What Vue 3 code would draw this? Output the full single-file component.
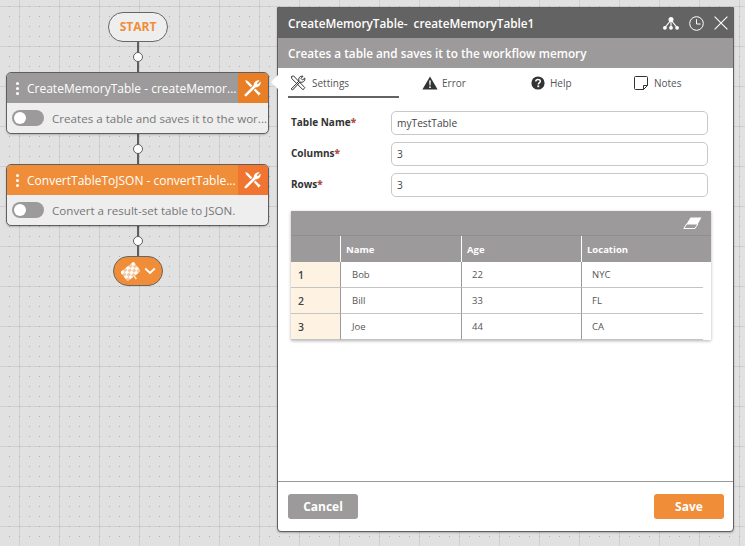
<script setup>
const nodes = [
  { id: 1, title: 'CreateMemoryTable - createMemor...', text: 'Creates a table and saves it to the wor...', top: 72, cls: 'grey' },
  { id: 2, title: 'ConvertTableToJSON - convertTable...', text: 'Convert a result-set table to JSON.', top: 164, cls: 'orange' }
];
const links = [
  { id: 1, top: 41, height: 31, dot: 56 },
  { id: 2, top: 134, height: 30, dot: 148 },
  { id: 3, top: 226, height: 32, dot: 240 }
];
const tabs = [
  { id: 's', label: 'Settings' },
  { id: 'e', label: 'Error' },
  { id: 'h', label: 'Help' },
  { id: 'n', label: 'Notes' }
];
const fields = [
  { label: 'Table Name', value: 'myTestTable' },
  { label: 'Columns', value: '3' },
  { label: 'Rows', value: '3' }
];
const rows = [
  { n: 1, name: 'Bob', age: 22, loc: 'NYC' },
  { n: 2, name: 'Bill', age: 33, loc: 'FL' },
  { n: 3, name: 'Joe', age: 44, loc: 'CA' }
];
// checks of the finish flag
const checks = [];
for (let r = 0; r < 4; r++) {
  for (let c = 0; c < 5; c++) {
    if ((r + c) % 2 === 0) checks.push({ x: 1 + c * 3.2, y: 3.5 + r * 2.8 });
  }
}
</script>

<template>
  <div class="canvas">
    <div v-for="l in links" :key="l.id" class="link" :style="{ top: l.top + 'px', height: l.height + 'px' }"></div>
    <div v-for="l in links" :key="'d' + l.id" class="port" :style="{ top: l.dot - 4 + 'px' }"></div>

    <div class="start">START</div>

    <div v-for="n in nodes" :key="n.id" class="node" :class="n.cls" :style="{ top: n.top + 'px' }">
      <div class="node-head">
        <span class="grip"><i></i><i></i><i></i></span>
        <span class="node-title">{{ n.title }}</span>
        <span class="node-tool">
          <svg width="18" height="18" viewBox="0 0 18 18" fill="none">
            <!-- screwdriver under the wrench, with a gap at the crossing -->
            <path d="M1.2 1 L3.8 2 L15 13.2 L16.8 14.2 L14.4 16.8 L13.4 15 L2.2 3.8 Z" fill="#fff" />
            <path d="M1.8 16.2 L11 7" stroke="currentColor" stroke-width="4.4" />
            <path d="M1.8 16.2 L11 7" stroke="#fff" stroke-width="2.5" stroke-linecap="round" />
            <path d="M10 8 C8.8 4.4 11.8 .6 15.6 1.4 L12.8 4.2 L13.8 5.2 L16.6 2.4 C17.4 6.2 13.6 9.2 10 8 Z" fill="#fff" />
          </svg>
        </span>
      </div>
      <div class="node-body">
        <span class="toggle"><i></i></span>
        <span class="node-text">{{ n.text }}</span>
      </div>
    </div>

    <div class="end">
      <svg width="19" height="19" viewBox="0 0 18 18">
        <g transform="rotate(-38 9 9)">
          <rect x="1" y="3.5" width="16" height="11.2" fill="#f7c79d" />
          <rect v-for="(k, i) in checks" :key="i" :x="k.x" :y="k.y" width="3.2" height="2.8" fill="#fff" />
          <path d="M9 14.5 V18" stroke="#fde9d8" stroke-width="1.4" />
        </g>
      </svg>
      <svg width="12" height="8" viewBox="0 0 12 8" fill="none" stroke="#fff" stroke-width="1.8"><path d="M1.2 1.5 L6 6 L10.8 1.5" /></svg>
    </div>

    <div class="pointer"></div>

    <section class="panel">
      <header class="panel-top">
        <span class="panel-title">CreateMemoryTable-&nbsp; createMemoryTable1</span>
        <span class="panel-icons">
          <svg width="16" height="13" viewBox="0 0 16 13" fill="#fff">
            <circle cx="8" cy="2.6" r="2.5" /><circle cx="1.9" cy="10.8" r="1.9" /><circle cx="8" cy="10.8" r="1.9" /><circle cx="14.1" cy="10.8" r="1.9" />
            <path d="M8 3 L1.9 10.6 M8 3 V10.6 M8 3 L14.1 10.6" stroke="#fff" stroke-width="1.1" />
          </svg>
          <svg width="15" height="15" viewBox="0 0 15 15" fill="none" stroke="#fff" stroke-width="1">
            <circle cx="7.5" cy="7.5" r="6.8" /><path d="M7.5 3.2 V8 H11.6" />
          </svg>
          <svg width="14" height="14" viewBox="0 0 14 14" fill="none" stroke="#fff" stroke-width="1.1">
            <path d="M.6 .6 L13.4 13.4 M13.4 .6 L.6 13.4" />
          </svg>
        </span>
      </header>
      <div class="panel-sub">Creates a table and saves it to the workflow memory</div>

      <nav class="tabs">
        <div v-for="t in tabs" :key="t.id" class="tab" :class="'tab-' + t.id">
          <svg v-if="t.id === 's'" width="16" height="16" viewBox="0 0 16 16" fill="none" stroke="#333" stroke-width="1">
            <path d="M1.2 14 L9 6 C8 3 10 .8 13 1.2 L11 3.4 L12.6 5 L14.8 3 C15.2 6 13 8 10 7 L2.6 15 Z" />
            <path d="M1.5 1.5 L3.5 .9 L14.8 12.6 L13 14.8 L1.8 3.6 Z" />
          </svg>
          <svg v-else-if="t.id === 'e'" width="16" height="14" viewBox="0 0 16 14">
            <path d="M8 .4 L15.6 13.6 H.4 Z" fill="#333" />
            <path d="M7.2 4.6 H8.8 L8.5 9.4 H7.5 Z M7.2 10.4 H8.8 V12 H7.2 Z" fill="#fff" />
          </svg>
          <svg v-else-if="t.id === 'h'" width="14" height="14" viewBox="0 0 14 14">
            <circle cx="7" cy="7" r="6.6" fill="#333" />
            <path d="M4.8 5.4 C4.8 2.8 9.3 2.8 9.3 5.3 C9.3 7 7.3 6.8 7.3 8.4" fill="none" stroke="#fff" stroke-width="1.5" />
            <rect x="6.4" y="9.4" width="1.8" height="1.8" fill="#fff" />
          </svg>
          <svg v-else width="14" height="14" viewBox="0 0 14 14" fill="none" stroke="#333" stroke-width="1">
            <path d="M1.5 .5 H12.5 Q13.5 .5 13.5 1.5 V9.5 L9.5 13.5 H1.5 Q.5 13.5 .5 12.5 V1.5 Q.5 .5 1.5 .5 Z" />
            <path d="M13.5 9.5 H9.5 V13.5" />
          </svg>
          <span>{{ t.label }}</span>
        </div>
      </nav>

      <div class="panel-main">
        <div class="fields">
          <div v-for="f in fields" :key="f.label" class="field">
            <label>{{ f.label }}<b>*</b></label>
            <div class="input">{{ f.value }}</div>
          </div>
        </div>

        <div class="grid-wrap">
          <div class="grid-bar">
            <svg width="19" height="12" viewBox="0 0 19 12">
              <path d="M7.5 .5 H18.5 L14.8 7 H3.6 Z" fill="#fff" />
              <path d="M3.6 7 H14.8 L12 11.5 H.8 Z" fill="none" stroke="#fff" stroke-width="1" />
            </svg>
          </div>
          <div class="grid-row grid-head">
            <div class="c0"></div>
            <div class="c c1">Name</div>
            <div class="c c2">Age</div>
            <div class="c c3">Location</div>
          </div>
          <div v-for="r in rows" :key="r.n" class="grid-row grid-line">
            <div class="c0">{{ r.n }}</div>
            <div class="c c1">{{ r.name }}</div>
            <div class="c c2">{{ r.age }}</div>
            <div class="c c3">{{ r.loc }}</div>
          </div>
        </div>
      </div>

      <footer class="panel-foot">
        <button class="btn cancel">Cancel</button>
        <button class="btn save">Save</button>
      </footer>
    </section>
  </div>
</template>

<style>
html, body { margin: 0; padding: 0; }
</style>

<style scoped>
.canvas {
  position: relative;
  width: 745px;
  height: 546px;
  overflow: hidden;
  font-family: "Open Sans", sans-serif;
  background-color: #e1e1e1;
  background-image:
    linear-gradient(to right, #d0d0d0 1px, transparent 1px),
    linear-gradient(to bottom, #d0d0d0 1px, transparent 1px);
  background-size: 40px 40px, 40px 40px;
  background-position: 19px 0, 0 6px;
}
.canvas::before {
  content: "";
  position: absolute;
  inset: 0;
  background-image: radial-gradient(circle at 0.5px 0.5px, #b0b0b0 0.7px, transparent 0.8px);
  background-size: 10px 10px;
  background-position: 9px 6px;
}
.link {
  position: absolute;
  left: 137px;
  width: 2px;
  background: #5f5f5f;
}
.port {
  position: absolute;
  left: 133px;
  width: 8px;
  height: 8px;
  border: 1px solid #5f5f5f;
  border-radius: 50%;
  background: #fff;
}
.start {
  position: absolute;
  left: 108px;
  top: 12px;
  width: 58px;
  height: 28px;
  border: 1px solid #666;
  border-radius: 15px;
  background: #eeeeee;
  color: #ef8d38;
  font-size: 12px;
  font-weight: 700;
  line-height: 28px;
  text-align: center;
}
.node {
  position: absolute;
  left: 6px;
  width: 261px;
  height: 60px;
  border: 1px solid #5f5f5f;
  border-radius: 5px;
  background: #eeeeee;
  overflow: hidden;
  box-shadow: 0 1px 2px rgba(0, 0, 0, .2);
}
.node-head {
  display: flex;
  align-items: center;
  height: 30px;
  color: #fff;
}
.grey .node-head { background: #9c9a9a; }
.orange .node-head { background: #ef8d38; }
.grip {
  display: flex;
  flex-direction: column;
  gap: 2px;
  margin-left: 9px;
  width: 3px;
}
.grip i {
  width: 3px;
  height: 3px;
  border-radius: 50%;
  background: #fff;
}
.node-title {
  flex: 1;
  min-width: 0;
  margin-left: 8px;
  font-size: 12px;
  white-space: nowrap;
  overflow: hidden;
}
.node-tool {
  display: flex;
  flex: none;
  align-items: center;
  justify-content: center;
  width: 30px;
  height: 30px;
}
.grey .node-tool { background: #e87e25; color: #e87e25; }
.orange .node-tool { background: #f07531; color: #f07531; }
.node-body {
  display: flex;
  align-items: center;
  height: 30px;
  padding-left: 5px;
}
.toggle {
  position: relative;
  width: 32px;
  height: 16px;
  border-radius: 8px;
  background: #9c9a9a;
  flex: none;
}
.toggle i {
  position: absolute;
  left: 2px;
  top: 2px;
  width: 12px;
  height: 12px;
  border-radius: 50%;
  background: #fff;
}
.node-text {
  margin-left: 8px;
  color: #777;
  font-size: 11.6px;
  white-space: nowrap;
}
.end {
  position: absolute;
  left: 113px;
  top: 256px;
  width: 48px;
  height: 28px;
  display: flex;
  align-items: center;
  justify-content: center;
  gap: 4px;
  border: 1px solid #666;
  border-radius: 15px;
  background: #ef8d38;
}
.pointer {
  position: absolute;
  left: 273px;
  top: 77px;
  width: 10px;
  height: 10px;
  background: #fff;
  transform: rotate(45deg);
  z-index: 2;
}
.panel {
  position: absolute;
  left: 277px;
  top: 7px;
  width: 455px;
  height: 523px;
  display: flex;
  flex-direction: column;
  border: 1px solid #5f5f5f;
  border-radius: 0 0 4px 4px;
  background: #fff;
  box-shadow: 0 1px 2px rgba(0, 0, 0, .25);
  z-index: 1;
}
.panel-top {
  display: flex;
  align-items: center;
  justify-content: space-between;
  height: 30px;
  padding: 0 5px 0 10px;
  background: #636363;
  color: #fff;
  font-size: 11.75px;
  font-weight: 600;
}
.panel-icons {
  display: flex;
  align-items: center;
  gap: 10px;
}
.panel-sub {
  height: 30px;
  padding-left: 10px;
  background: #9c9a9a;
  color: #fff;
  font-size: 11.75px;
  font-weight: 600;
  line-height: 30px;
}
.tabs {
  display: grid;
  grid-template-columns: repeat(4, 111px);
  padding-left: 10px;
  height: 30px;
}
.tab {
  box-sizing: border-box;
  display: flex;
  align-items: center;
  gap: 5px;
  height: 30px;
  color: #555;
  font-size: 10px;
}
.tab-s { border-bottom: 2px solid #636363; padding: 2px 0 0 2px; gap: 6px; }
.tab-e { padding-left: 23px; gap: 4px; }
.tab-h { padding-left: 21px; }
.tab-n { padding-left: 13px; gap: 6px; }
.panel-main {
  flex: 1;
  padding: 13px 25px 0 13px;
}
.fields {
  display: flex;
  flex-direction: column;
  gap: 7px;
}
.field {
  display: flex;
  align-items: center;
  height: 24px;
}
.field label {
  width: 100px;
  padding-bottom: 2px;
  color: #333;
  font-size: 10px;
  font-weight: 700;
}
.field label b { color: #b5483f; }
.input {
  flex: 1;
  box-sizing: border-box;
  height: 24px;
  border: 1px solid #c8c8c8;
  border-radius: 5px;
  padding-left: 5px;
  color: #444;
  font-size: 10.2px;
  line-height: 23px;
}
.grid-wrap {
  margin-top: 14px;
  margin-right: -3px;
  background: #fff;
  box-shadow: 0 1px 3px rgba(0, 0, 0, .3);
}
.grid-bar {
  display: flex;
  align-items: center;
  justify-content: flex-end;
  height: 24px;
  padding-right: 9px;
  background: #9c9a9a;
  border-bottom: 1px solid #908e8e;
}
.grid-row {
  display: grid;
  grid-template-columns: 49px 121px 120px 1fr;
  grid-template-rows: 26px;
}
.grid-row > div {
  box-sizing: border-box;
  height: 26px;
  padding-top: 1px;
}
.grid-head {
  background: #9c9a9a;
  color: #fff;
  font-size: 9.5px;
  font-weight: 700;
}
.grid-head .c {
  border-left: 1px solid #fff;
  padding-left: 5px;
  line-height: 25px;
}
.grid-line {
  color: #555;
  font-size: 9.5px;
  line-height: 24px;
}
.grid-line .c0 {
  background: #fef3e2;
  padding-left: 7px;
  color: #444;
  font-size: 10.5px;
  font-weight: 600;
  border-bottom: 1px solid #c4c4c4;
}
.grid-line .c {
  border-left: 1px solid #9c9a9a;
  border-bottom: 1px solid #c4c4c4;
  padding-left: 10px;
}
.grid-line .c1 { padding-left: 11px; }
.grid-line .c3 { margin-right: 8px; }
.panel-foot {
  display: flex;
  justify-content: space-between;
  align-items: center;
  height: 49px;
  padding: 0 9px 0 10px;
  border-top: 1px solid #999;
}
.btn {
  width: 70px;
  height: 25px;
  border: 0;
  border-radius: 3px;
  color: #fff;
  font-family: inherit;
  font-size: 12px;
  font-weight: 700;
}
.cancel { background: #9c9a9a; }
.save { background: #ef8d38; }
</style>
